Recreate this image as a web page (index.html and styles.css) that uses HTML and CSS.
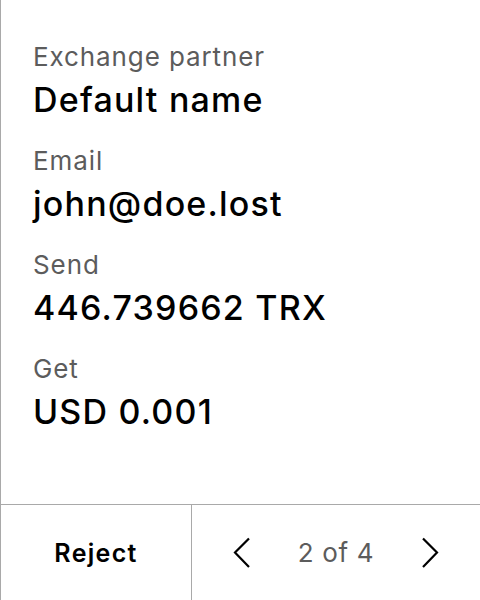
FILE: index.html
```html
<!DOCTYPE html>
<html>
<head>
<meta charset="utf-8">
<link rel="stylesheet" href="styles.css">
</head>
<body>
<div class="panel">
  <div class="details">
    <div class="field">
      <div class="label">Exchange partner</div>
      <div class="value">Default name</div>
    </div>
    <div class="field">
      <div class="label">Email</div>
      <div class="value">john@doe.lost</div>
    </div>
    <div class="field">
      <div class="label">Send</div>
      <div class="value">446.739662 TRX</div>
    </div>
    <div class="field">
      <div class="label">Get</div>
      <div class="value">USD 0.001</div>
    </div>
  </div>
  <div class="footer">
    <button class="reject">Reject</button>
    <div class="pager">
      <button class="nav" aria-label="Previous">
        <svg width="30" height="40" viewBox="0 0 30 40"><path d="M21 5.5 L7 19.5 L21 34" fill="none" stroke="#000" stroke-width="2.2"/></svg>
      </button>
      <span class="count">2 of 4</span>
      <button class="nav" aria-label="Next">
        <svg width="30" height="40" viewBox="0 0 30 40"><path d="M9 5.5 L23 19.5 L9 34" fill="none" stroke="#000" stroke-width="2.2"/></svg>
      </button>
    </div>
  </div>
</div>
</body>
</html>
```
FILE: styles.css
```css
* { box-sizing: border-box; }
html, body { margin: 0; padding: 0; background: #fff; }
body { font-family: Inter, "Noto Sans", sans-serif; color: #000; }
.panel {
  width: 480px;
  height: 600px;
  border-left: 1px solid #a9a9a9;
  display: flex;
  flex-direction: column;
}
.details {
  flex: 1;
  padding: 41px 0 0 32px;
  display: flex;
  flex-direction: column;
  gap: 25px;
}
.field { display: flex; flex-direction: column; gap: 7px; }
.label { font-size: 26px; line-height: 32px; color: #5c5c5c; letter-spacing: 0.9px; }
.value { font-size: 34px; line-height: 40px; color: #000; font-weight: 500; letter-spacing: 1.2px; }
.footer {
  height: 96px;
  border-top: 1px solid #a9a9a9;
  display: flex;
}
button { font-family: inherit; background: none; border: 0; padding: 0; cursor: pointer; }
.reject {
  width: 191px;
  border-right: 1px solid #a9a9a9;
  font-size: 25px;
  font-weight: 600;
  color: #000;
  letter-spacing: 1.3px;
}
.pager {
  flex: 1;
  display: flex;
  align-items: center;
  justify-content: space-between;
  padding: 0 36px 0 36px;
}
.nav { display: flex; align-items: center; }
.count { font-size: 26px; color: #5c5c5c; letter-spacing: 0.7px; }
```
